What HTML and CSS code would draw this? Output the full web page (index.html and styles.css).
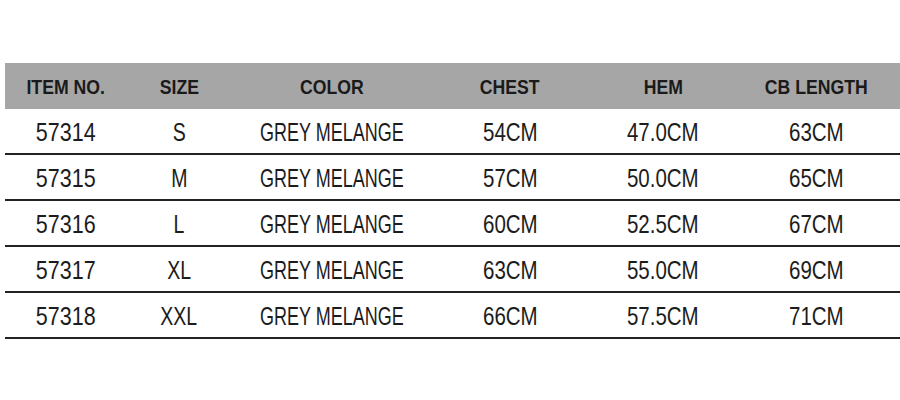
FILE: index.html
```html
<!DOCTYPE html>
<html>
<head>
<meta charset="utf-8">
<link rel="stylesheet" href="styles.css">
</head>
<body>
<div class="wrap">
<table class="size-table">
  <colgroup>
    <col class="c1"><col class="c2"><col class="c3"><col class="c4"><col class="c5"><col class="c6">
  </colgroup>
  <thead>
    <tr><th><span>ITEM NO.</span></th><th><span>SIZE</span></th><th><span>COLOR</span></th><th><span>CHEST</span></th><th><span>HEM</span></th><th class="last"><span>CB LENGTH</span></th></tr>
  </thead>
  <tbody>
    <tr><td class="num"><span>57314</span></td><td class="sz"><span>S</span></td><td class="color"><span>GREY MELANGE</span></td><td class="cm"><span>54CM</span></td><td class="cm"><span>47.0CM</span></td><td class="cm last"><span>63CM</span></td></tr>
    <tr><td class="num"><span>57315</span></td><td class="sz"><span>M</span></td><td class="color"><span>GREY MELANGE</span></td><td class="cm"><span>57CM</span></td><td class="cm"><span>50.0CM</span></td><td class="cm last"><span>65CM</span></td></tr>
    <tr><td class="num"><span>57316</span></td><td class="sz"><span>L</span></td><td class="color"><span>GREY MELANGE</span></td><td class="cm"><span>60CM</span></td><td class="cm"><span>52.5CM</span></td><td class="cm last"><span>67CM</span></td></tr>
    <tr><td class="num"><span>57317</span></td><td class="sz"><span>XL</span></td><td class="color"><span>GREY MELANGE</span></td><td class="cm"><span>63CM</span></td><td class="cm"><span>55.0CM</span></td><td class="cm last"><span>69CM</span></td></tr>
    <tr><td class="num"><span>57318</span></td><td class="sz"><span>XXL</span></td><td class="color"><span>GREY MELANGE</span></td><td class="cm"><span>66CM</span></td><td class="cm"><span>57.5CM</span></td><td class="cm last"><span>71CM</span></td></tr>
  </tbody>
</table>
</div>
</body>
</html>
```
FILE: styles.css
```css
html, body {
  margin: 0;
  padding: 0;
  background: #ffffff;
  overflow: hidden;
}
.wrap {
  padding: 63px 0 0 5px;
}
.size-table {
  width: 895px;
  border-collapse: collapse;
  table-layout: fixed;
  font-family: "Liberation Sans", Arial, sans-serif;
  color: #1c1c1c;
}
.c1 { width: 122px; }
.c2 { width: 104px; }
.c3 { width: 202px; }
.c4 { width: 154px; }
.c5 { width: 152px; }
.c6 { width: 161px; }
.size-table span {
  display: inline-block;
  white-space: nowrap;
  transform-origin: center center;
}
.size-table th {
  background: #a6a6a6;
  height: 45px;
  padding: 1px 0 0 0;
  font-size: 21px;
  font-weight: bold;
  text-align: center;
  vertical-align: middle;
  color: #1a1a1a;
}
.size-table th span {
  transform: scaleX(0.84);
}
.size-table td {
  height: 42px;
  padding: 2px 0 0 0;
  font-size: 25px;
  font-weight: normal;
  text-align: center;
  vertical-align: middle;
  border-bottom: 2px solid #222222;
}
.size-table th.last,
.size-table td.last {
  padding-right: 7px;
}
.size-table .num span { transform: scaleX(0.86); }
.size-table .sz span { transform: scaleX(0.78); }
.size-table .color span { transform: scaleX(0.72); }
.size-table .cm span { transform: scaleX(0.82); }
```
